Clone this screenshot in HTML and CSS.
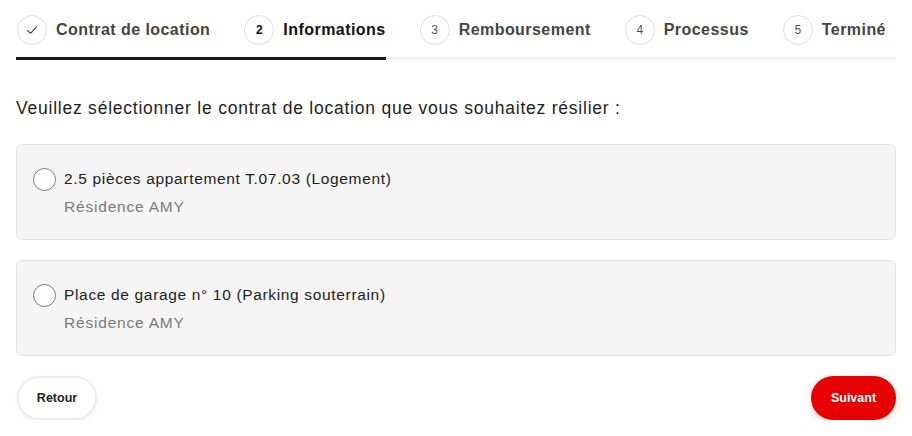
FILE: index.html
```html
<!DOCTYPE html>
<html lang="fr">
<head>
<meta charset="utf-8">
<title>Résiliation</title>
<link rel="stylesheet" href="styles.css">
</head>
<body>
<div class="page">
  <nav class="stepper">
    <div class="step done">
      <span class="circle"><svg width="14" height="14" viewBox="0 0 14 14"><path d="M2.5 7.5 L5.6 10.4 L11.5 3.8" fill="none" stroke="#444" stroke-width="1.1" stroke-linecap="round" stroke-linejoin="round"/></svg></span>
      <span class="label">Contrat de location</span>
    </div>
    <div class="step active">
      <span class="circle">2</span>
      <span class="label">Informations</span>
    </div>
    <div class="step">
      <span class="circle">3</span>
      <span class="label">Remboursement</span>
    </div>
    <div class="step">
      <span class="circle">4</span>
      <span class="label">Processus</span>
    </div>
    <div class="step">
      <span class="circle">5</span>
      <span class="label">Terminé</span>
    </div>
  </nav>

  <p class="prompt">Veuillez sélectionner le contrat de location que vous souhaitez résilier :</p>

  <div class="options">
    <label class="option">
      <span class="radio"></span>
      <span class="option-text">
        <span class="title">2.5 pièces appartement T.07.03 (Logement)</span>
        <span class="sub">Résidence AMY</span>
      </span>
    </label>
    <label class="option">
      <span class="radio"></span>
      <span class="option-text">
        <span class="title">Place de garage n° 10 (Parking souterrain)</span>
        <span class="sub">Résidence AMY</span>
      </span>
    </label>
  </div>

  <div class="actions">
    <button class="btn btn-back">Retour</button>
    <button class="btn btn-next">Suivant</button>
  </div>
</div>
</body>
</html>
```
FILE: styles.css
```css
* { box-sizing: border-box; }
html, body { margin: 0; background: #fff; }
body {
  font-family: "Liberation Sans", Arial, Helvetica, sans-serif;
  color: #222;
}
.page { padding: 0 16px; }

.stepper {
  display: flex;
  height: 59px;
  border-bottom: 1px solid #e2e2e2;
}
.step {
  display: flex;
  align-items: center;
  gap: 9px;
  height: 60px;
  padding-top: 3px;
  margin-bottom: -1px;
  border-bottom: 3px solid transparent;
}
.step + .step { margin-left: 33px; }
.step.done { padding-right: 33px; border-bottom-color: #1a1a1a; }
.step.done + .step { margin-left: 0; }
.step.active { border-bottom-color: #1a1a1a; }

.circle {
  width: 30px;
  height: 30px;
  border-radius: 50%;
  border: 1px solid #dedede;
  display: flex;
  align-items: center;
  justify-content: center;
  font-size: 12px;
  color: #555;
  flex: none;
  margin-left: 1px;
}
.step.active .circle { color: #111; font-weight: bold; }
.label {
  font-size: 16px;
  letter-spacing: 0.45px;
  font-weight: bold;
  color: #444;
}
.step.active .label { color: #111; }

.prompt {
  margin: 37px 0 24px;
  font-size: 17.5px;
  letter-spacing: 0.77px;
  line-height: 24px;
  color: #1e1e1e;
}

.options { display: flex; flex-direction: column; gap: 20px; }
.option {
  display: flex;
  align-items: flex-start;
  gap: 8px;
  background: #f5f5f5;
  border: 1px solid #e3e3e3;
  border-radius: 6px;
  padding: 23px 16px 21px;
}
.radio {
  width: 23px;
  height: 23px;
  border-radius: 50%;
  border: 1px solid #7a7a7a;
  background: #fff;
  flex: none;
}
.option-text { display: flex; flex-direction: column; gap: 6px; }
.title { font-size: 15.5px; letter-spacing: 0.66px; line-height: 22px; color: #222; }
.sub { font-size: 15.5px; letter-spacing: 0.8px; line-height: 22px; color: #7a7a7a; }

.actions {
  display: flex;
  justify-content: space-between;
  align-items: center;
  margin-top: 20px;
}
.btn {
  font-family: "Liberation Sans", Arial, sans-serif;
  font-weight: bold;
  font-size: 12.5px;
  height: 44px;
  border-radius: 22px;
  cursor: pointer;
}
.btn-back {
  width: 80px;
  background: #fff;
  color: #222;
  border: 2px solid #ececec;
  box-shadow: 0 2px 6px rgba(0,0,0,0.06);
  margin-left: 1px;
}
.btn-next {
  width: 85px;
  background: #e60000;
  color: #fff;
  border: none;
  box-shadow: 0 3px 8px rgba(230,0,0,0.18);
}
```
